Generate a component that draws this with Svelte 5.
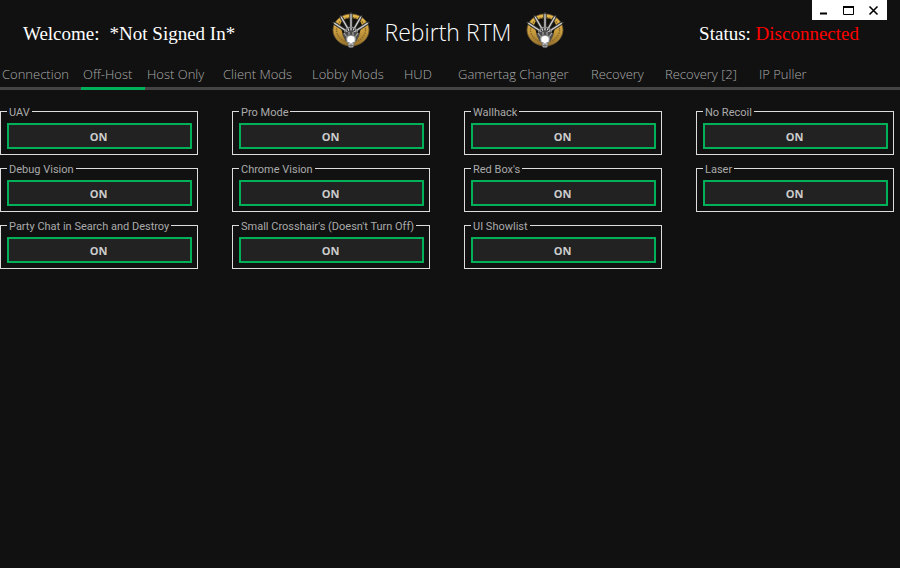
<script>
  const tabs = [
    'Connection', 'Off-Host', 'Host Only', 'Client Mods', 'Lobby Mods', 'HUD',
    'Gamertag Changer', 'Recovery', 'Recovery [2]', 'IP Puller'
  ];
  let active = $state('Off-Host');

  const mods = [
    'UAV', 'Pro Mode', 'Wallhack', 'No Recoil',
    'Debug Vision', 'Chrome Vision', "Red Box's", 'Laser',
    'Party Chat in Search and Destroy', "Small Crosshair's (Doesn't Turn Off)", 'UI Showlist'
  ];
  const blades = [-57, -30, 30, 57, 0];
</script>

{#snippet emblem()}
  <svg class="emblem" viewBox="0 0 38 38" aria-hidden="true">
    <defs>
      <linearGradient id="gold" x1="0" y1="0" x2="0" y2="1">
        <stop offset="0" stop-color="#e6b84a" />
        <stop offset="0.55" stop-color="#c99c3e" />
        <stop offset="1" stop-color="#94702a" />
      </linearGradient>
      <linearGradient id="steel" x1="0" y1="0" x2="1" y2="0">
        <stop offset="0" stop-color="#5c5c5c" />
        <stop offset="0.5" stop-color="#b8b8b8" />
        <stop offset="1" stop-color="#666" />
      </linearGradient>
    </defs>
    <ellipse cx="19" cy="19" rx="18" ry="16" fill="url(#gold)" stroke="#6e5830" stroke-width="0.8" />
    <ellipse cx="19" cy="19" rx="14.500" ry="12.500" fill="none" stroke="#8a6828" stroke-width="1.400" stroke-dasharray="1.500 1" />
    <path d="M8 14 Q10 7 19 7 Q28 7 30 14 L27 24 H11Z" fill="#12100b" />
    {#each blades as angle}
      <g transform="rotate({angle} 19 23)">
        <path d="M17.700 24 V4 L19 1 L20.300 4 V24Z" fill="url(#steel)" stroke="#262626" stroke-width="0.7" />
        <path d="M19 3 V21" stroke="#dedede" stroke-width="0.6" />
        <path d="M16.700 16.500 H21.300" stroke="#8c8c8c" stroke-width="1.200" />
      </g>
    {/each}
    <path d="M10.500 24 Q12 20 16 21 L19 19 L22 21 Q26 20 27.500 24 L24.500 30 H13.500Z" fill="#4c4c4c" />
    <path d="M12 22 L15 26 M26 22 L23 26 M17 21 V24 M21 21 V24" stroke="#a5a5a5" stroke-width="1.200" />
    <path d="M14 28 Q14 24 19 24 Q24 24 24 28 Q24 31 22 32.500 L21.500 36 Q19 37.500 16.500 36 L16 32.500 Q14 31 14 28Z" fill="#b8b8b8" stroke="#555" stroke-width="0.6" />
    <ellipse cx="19" cy="28.500" rx="3.600" ry="3.500" fill="#fff" />
    <path d="M15.500 32 L17.500 31.700 M20.500 31.700 L22.500 32 M17 34.500 H21 M19 33 V36.500" stroke="#666" stroke-width="0.9" />
  </svg>
{/snippet}

<div class="app">
  <div class="controls">
    <button aria-label="Minimize">
      <svg viewBox="0 0 25 20"><path d="M8 13.500 H15" stroke-width="2" /></svg>
    </button>
    <button aria-label="Maximize">
      <svg viewBox="0 0 25 20"><path d="M6 7 H17" stroke-width="2" /><path d="M6.500 6 V14.500 H16.500 V6" stroke-width="1" /></svg>
    </button>
    <button aria-label="Close">
      <svg viewBox="0 0 25 20"><path d="M7.500 6.500 L15.500 14.500 M15.500 6.500 L7.500 14.500" stroke-width="1.600" /></svg>
    </button>
  </div>

  <header>
    <div class="welcome"><span>Welcome:</span><span>*Not Signed In*</span></div>
    <div class="brand">
      {@render emblem()}
      <h1>Rebirth RTM</h1>
      {@render emblem()}
    </div>
    <div class="status">Status: <span class="off">Disconnected</span></div>
  </header>

  <nav>
    {#each tabs as tab}
      <button class:active={tab === active} onclick={() => (active = tab)}>{tab}</button>
    {/each}
  </nav>

  <main>
    {#each mods as mod}
      <fieldset>
        <legend>{mod}</legend>
        <button>ON</button>
      </fieldset>
    {/each}
  </main>
</div>

<style>
  :global(body) {
    margin: 0;
    background: #111;
  }
  .app {
    position: relative;
    min-height: 100vh;
    box-sizing: border-box;
    background: #111;
    color: #fff;
  }
  button {
    margin: 0;
    padding: 0;
    border: 0;
    background: none;
  }
  .controls {
    position: absolute;
    top: 0;
    right: 13px;
    display: flex;
    background: #fff;
  }
  .controls button {
    width: 25px;
    height: 20px;
  }
  .controls svg {
    display: block;
    width: 25px;
    height: 20px;
    fill: none;
    stroke: #000;
  }
  header {
    display: grid;
    grid-template-columns: 1fr auto 1fr;
    align-items: center;
    height: 60px;
    padding-right: 4px;
  }
  .welcome,
  .status {
    padding-top: 8px;
    font: 19px/24px "Liberation Serif", serif;
    white-space: nowrap;
  }
  .welcome {
    display: flex;
    gap: 10px;
    padding-left: 23px;
  }
  .status {
    justify-self: end;
    padding-right: 37px;
  }
  .off {
    color: #f00;
  }
  .brand {
    display: flex;
    align-items: center;
    gap: 15px;
  }
  .emblem {
    width: 38px;
    height: 38px;
  }
  h1 {
    margin: 0;
    padding-top: 4px;
    font: 300 23px/32px "Open Sans", sans-serif;
  }
  nav {
    display: grid;
    grid-template-columns: 81px 64px 76px 89px 92px 54px 133px 74px 94px 1fr;
    height: 30px;
  }
  nav button {
    padding: 1px 0 0 2px;
    border-bottom: 3px solid #444;
    color: #aaa;
    font: 300 13px/26px "Open Sans", sans-serif;
    text-align: left;
    white-space: nowrap;
  }
  nav .active {
    border-color: #00b159;
  }
  main {
    display: grid;
    grid-template-columns: repeat(4, 1fr);
    gap: 6px 34px;
    padding: 14px 6px 14px 0;
  }
  fieldset {
    min-width: 0;
    margin: 0;
    padding: 4px 5px 5px 6px;
    border: 1px solid #ddd;
  }
  legend {
    padding: 2px 2px 0;
    color: #aaa;
    font: 11px/13px Roboto, sans-serif;
    white-space: nowrap;
  }
  fieldset button {
    display: block;
    box-sizing: border-box;
    width: 100%;
    height: 26px;
    padding: 2px 2px 0 0;
    border: 2px solid #00b159;
    background: #222;
    color: #ccc;
    font: bold 11px/20px "Open Sans", sans-serif;
  }
</style>
